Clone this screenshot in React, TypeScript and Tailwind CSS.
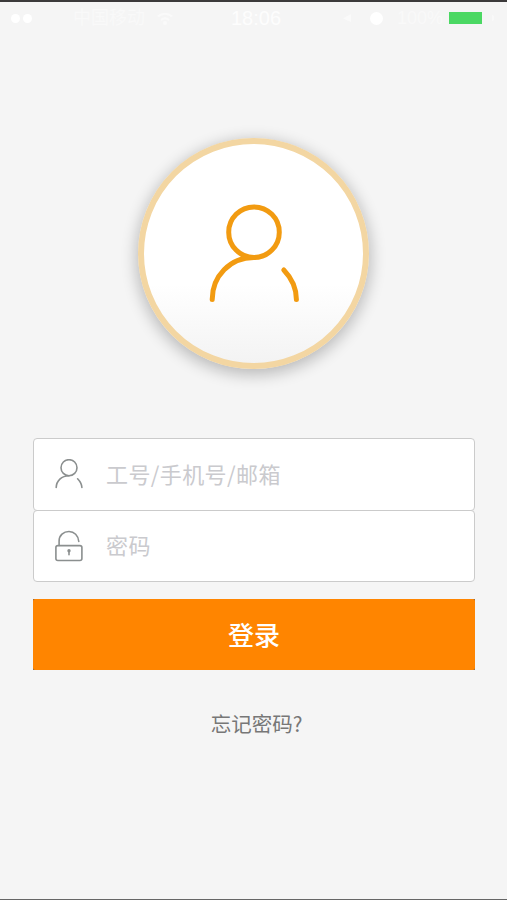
import { useState, type ReactNode } from 'react'
import { clsx } from 'clsx'

interface FieldProps {
  icon: ReactNode
  placeholder: string
  type?: string
  value: string
  onChange: (value: string) => void
  className?: string
}

function UserIcon() {
  return (
    <svg width="30" height="32" viewBox="0 0 30 32" fill="none" stroke="#8b8f8f" strokeWidth="1.6" strokeLinecap="round">
      <circle cx="15" cy="8.7" r="8" />
      <path d="M2.2 28.5C2.4 22 7.5 16.7 15 16.7" />
      <path d="M23.6 19.8C26.2 22.5 27.8 25.3 27.9 28.5" />
    </svg>
  )
}

function LockIcon() {
  return (
    <svg width="30" height="32" viewBox="0 0 30 32" fill="none" stroke="#8b8f8f" strokeWidth="1.6" strokeLinecap="round">
      <rect x="1.9" y="15.6" width="26" height="14.9" rx="2" />
      <path d="M5.1 15.5V11C5.1 5.5 9.5 1.5 15 1.5C20.2 1.5 24.3 5.5 24.8 11.5" />
      <path d="M15 21V24.8" strokeWidth="1.6" />
      <circle cx="15" cy="20.8" r="0.9" fill="#8b8f8f" />
    </svg>
  )
}

function StatusBar() {
  return (
    <div className="flex h-8 items-center font-['Liberation_Sans','Noto_Sans_CJK_SC',sans-serif] leading-none text-white">
      <div className="ml-[11px] flex w-[62px] gap-[3px]">
        <span className="h-[9px] w-[9px] rounded-full bg-white" />
        <span className="h-[9px] w-[9px] rounded-full bg-white" />
      </div>
      <span className="w-[84px] text-[18px] text-[#f9f9f9]">中国移动</span>
      <svg width="16" height="13" viewBox="0 0 16 13" fill="none" stroke="#fafafa" strokeWidth="2">
        <path d="M1 4.5C5 0.8 11 0.8 15 4.5M4 8C6.5 6 9.5 6 12 8" />
        <circle cx="8" cy="11" r="1" fill="#fafafa" />
      </svg>
      <span className="ml-[58px] w-[112px] text-[20px] font-medium text-[#fdfdfd]">18:06</span>
      <svg width="8" height="8" viewBox="0 0 8 8" fill="#fafafa">
        <path d="M8 0V8L0 4.5Z" />
      </svg>
      <span className="ml-[19px] h-[13px] w-[13px] rounded-full bg-white" />
      <span className="ml-[14px] w-[52px] text-[18px] text-[#f9f9f9]">100%</span>
      <span className="h-3 w-[33px] bg-[#4bd863]" />
      <span className="ml-[10px] h-[6px] w-[2px] rounded-r bg-[#f9f9f9]" />
    </div>
  )
}

function Avatar() {
  return (
    <div className="mx-auto mt-[104px] flex h-[231px] w-[231px] items-center justify-center rounded-full border-[6px] border-[#f3d6a2] bg-linear-to-b from-white from-64% to-[#f3f3f3] shadow-[0_4px_15px_2px_rgba(0,0,0,0.24)]">
      <svg width="94" height="102" viewBox="0 0 94 102" fill="none" stroke="#f29b11" strokeWidth="5" strokeLinecap="round">
        <circle cx="47" cy="29.2" r="25.3" />
        <path d="M5.2 96.5C5.2 73.2 23 54.6 47 54.6" />
        <path d="M76.8 67C84.5 75 89.4 85.5 89.4 96.5" />
      </svg>
    </div>
  )
}

function Field({ icon, placeholder, type = 'text', value, onChange, className }: FieldProps) {
  return (
    <label className={clsx('flex w-full items-center rounded-[4px] border border-[#cbcbcb] bg-white pl-5', className)}>
      {icon}
      <input
        type={type}
        value={value}
        placeholder={placeholder}
        onChange={(e) => onChange(e.target.value)}
        className="ml-[22px] min-w-0 flex-1 bg-transparent pb-[3px] text-[22px] tracking-[0.4px] text-gray-700 outline-none placeholder:text-[#cacace]"
      />
    </label>
  )
}

export default function App() {
  const [account, setAccount] = useState('')
  const [password, setPassword] = useState('')

  return (
    <div className="flex h-[900px] w-full flex-col border-t-2 border-b border-t-[#3c3a3b] border-b-[#666] bg-[#f5f5f5] font-['Noto_Sans_CJK_SC',sans-serif]">
      <StatusBar />
      <Avatar />

      <form className="mx-8 mt-[69px] flex flex-col pl-px" onSubmit={(e) => e.preventDefault()}>
        <Field
          icon={<UserIcon />}
          placeholder="工号/手机号/邮箱"
          value={account}
          onChange={setAccount}
          className="h-[73px]"
        />
        <Field
          icon={<LockIcon />}
          placeholder="密码"
          type="password"
          value={password}
          onChange={setPassword}
          className="-mt-px h-[72px]"
        />
        {/* 四角露出深色底 */}
        <div className="mt-[17px] flex bg-[#666]">
          <button type="submit" className="h-[71px] flex-1 rounded-[2px] bg-[#ff8500] pb-0.5 text-[26px] font-medium text-white">
            登录
          </button>
        </div>
      </form>

      <a className="mx-auto mt-[37px] pl-[6px] text-[20.5px] leading-8 text-[#777]">忘记密码?</a>
    </div>
  )
}
